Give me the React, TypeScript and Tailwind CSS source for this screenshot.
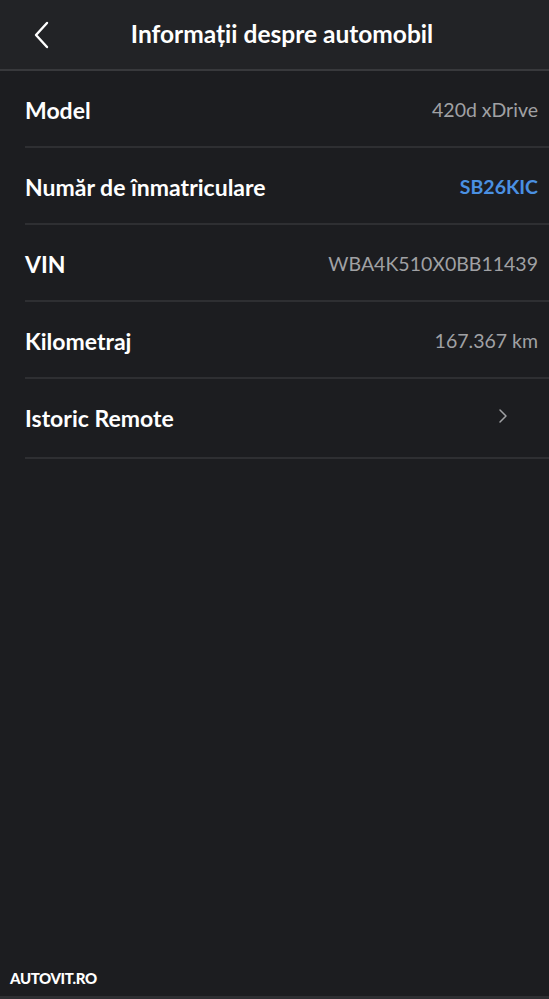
const rows = [
  { label: 'Model', value: '420d xDrive' },
  { label: 'Număr de înmatriculare', value: 'SB26KIC', accent: true },
  { label: 'VIN', value: 'WBA4K510X0BB11439' },
  { label: 'Kilometraj', value: '167.367 km' },
];

export default function App() {
  return (
    <div
      className="h-[999px] w-[549px] bg-[#1c1d20] flex flex-col text-white"
      style={{ fontFamily: 'Lato, "Noto Sans", sans-serif' }}
    >
      <header className="h-[71px] bg-[#222326] border-b-2 border-[#38393c] flex items-center relative">
        <svg className="absolute left-[33px] top-[21px]" width="18" height="28" viewBox="0 0 18 28" fill="none">
          <path d="M14 2 3 14l11 12" stroke="white" strokeWidth="2.4" strokeLinecap="round" strokeLinejoin="round" />
        </svg>
        <h1 className="w-full text-center text-[24.5px] font-bold pl-[15px]">Informații despre automobil</h1>
      </header>

      <main className="pl-[25px] flex-1">
        {rows.map((r) => (
          <div key={r.label} className="h-[77px] pt-[3px] border-b-2 border-[#2e2f32] flex items-center justify-between pr-[11px]">
            <span className="text-[23px] font-bold">{r.label}</span>
            <span className={r.accent ? 'text-[19.5px] font-bold text-[#4a90e2]' : 'text-[19.5px] text-[#a0a1a4]'}>{r.value}</span>
          </div>
        ))}
        <div className="h-[80px] border-b-2 border-[#2e2f32] flex items-center justify-between pr-[41px]">
          <span className="text-[23px] font-bold">Istoric Remote</span>
          <svg width="10" height="16" viewBox="0 0 10 16" fill="none" className="-mt-[4px]">
            <path d="M2 2l6 6-6 6" stroke="#a0a1a4" strokeWidth="1.5" strokeLinecap="round" strokeLinejoin="round" />
          </svg>
        </div>
      </main>

      <footer className="h-[28px] border-b-[3px] border-[#2e2f32] px-[10px] flex items-start">
        <span className="text-[15px] font-black tracking-tight leading-none">AUTOVIT.RO</span>
      </footer>
    </div>
  );
}
